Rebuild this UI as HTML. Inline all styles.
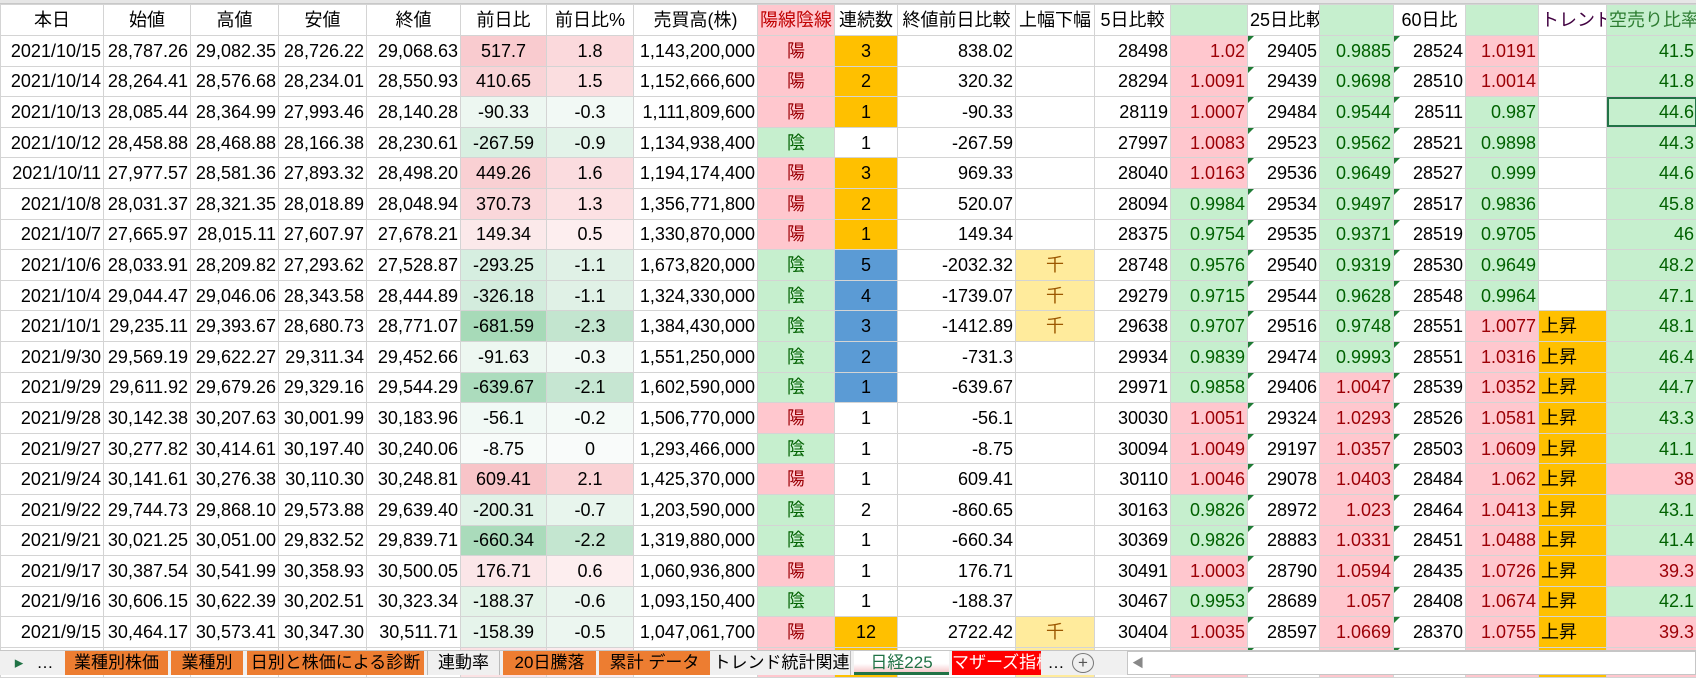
<!DOCTYPE html>
<html><head><meta charset="utf-8"><style>
*{margin:0;padding:0;box-sizing:border-box}
body{width:1696px;height:675px;overflow:hidden;background:#fff;font-family:"Liberation Sans","Noto Sans CJK JP",sans-serif;font-size:18px;color:#000;position:relative}
.top{position:absolute;left:0;top:0;width:1696px;height:4px;background:#e6e6e6;border-bottom:1px solid #c8c8c8}
table{position:absolute;left:0;top:4px;border-collapse:collapse;table-layout:fixed;width:1696px}
td{border:1px solid #d4d4d4;height:30.6px;white-space:nowrap;overflow:hidden;text-align:right;padding:0 2px;line-height:28px;position:relative;text-overflow:clip}
tr.h td{height:31px;text-align:center}
.c{text-align:center}.l{text-align:left}
.p{background:#ffc7ce;color:#9c0006}
.g{background:#c6efce;color:#006100}
.o{background:#ffc000}
.b{background:#5b9bd5}
.y{background:#ffeb9c;color:#9c5700}
.t::before{content:"";position:absolute;left:0;top:0;border-top:6px solid #1e7b34;border-right:6px solid transparent}
.sel{outline:2px solid #217346;outline-offset:-2px}
.tabs{position:absolute;left:0;top:650px;width:1696px;height:25px;background:#f0f0f0;border-top:1px solid #c6c6c6;font-size:17px}
.tab{position:absolute;top:0;height:24px;line-height:23px;text-align:center;white-space:nowrap;overflow:hidden}
.or{background:#ed7d31;color:#000}
</style></head><body>
<div class="top"></div>
<table>
<colgroup><col style="width:103px"><col style="width:87px"><col style="width:88px"><col style="width:88px"><col style="width:94px"><col style="width:86px"><col style="width:87px"><col style="width:124px"><col style="width:77px"><col style="width:63px"><col style="width:118px"><col style="width:79px"><col style="width:76px"><col style="width:77px"><col style="width:72px"><col style="width:74px"><col style="width:72px"><col style="width:73px"><col style="width:68px"><col style="width:90px"></colgroup>
<tr class="h"><td>本日</td><td>始値</td><td>高値</td><td>安値</td><td>終値</td><td>前日比</td><td>前日比%</td><td>売買高(株)</td><td class="p" style="color:#c00000">陽線陰線</td><td>連続数</td><td>終値前日比較</td><td>上幅下幅</td><td class="l">5日比較</td><td class="g"></td><td class="l">25日比較</td><td class="g"></td><td class="l">60日比</td><td class="g"></td><td class="l" style="color:#400040">トレンド</td><td class="g l" style="color:#2e7d32">空売り比率</td></tr>
<tr><td>2021/10/15</td><td>28,787.26</td><td>29,082.35</td><td>28,726.22</td><td>29,068.63</td><td class="c" style="background:#f9cbcf">517.7</td><td class="c" style="background:#fbd9dc">1.8</td><td>1,143,200,000</td><td class="c p">陽</td><td class="c o">3</td><td>838.02</td><td></td><td>28498</td><td class="p">1.02</td><td class="t">29405</td><td class="g">0.9885</td><td class="t">28524</td><td class="p">1.0191</td><td></td><td class="g">41.5</td></tr>
<tr><td>2021/10/14</td><td>28,264.41</td><td>28,576.68</td><td>28,234.01</td><td>28,550.93</td><td class="c" style="background:#f9d4d7">410.65</td><td class="c" style="background:#fbdee0">1.5</td><td>1,152,666,600</td><td class="c p">陽</td><td class="c o">2</td><td>320.32</td><td></td><td>28294</td><td class="p">1.0091</td><td class="t">29439</td><td class="g">0.9698</td><td class="t">28510</td><td class="p">1.0014</td><td></td><td class="g">41.8</td></tr>
<tr><td>2021/10/13</td><td>28,085.44</td><td>28,364.99</td><td>27,993.46</td><td>28,140.28</td><td class="c" style="background:#edf7f1">-90.33</td><td class="c" style="background:#f2f9f5">-0.3</td><td>1,111,809,600</td><td class="c p">陽</td><td class="c o">1</td><td>-90.33</td><td></td><td>28119</td><td class="p">1.0007</td><td class="t">29484</td><td class="g">0.9544</td><td class="t">28511</td><td class="g">0.987</td><td></td><td class="g sel">44.6</td></tr>
<tr><td>2021/10/12</td><td>28,458.88</td><td>28,468.88</td><td>28,166.38</td><td>28,230.61</td><td class="c" style="background:#d8efe1">-267.59</td><td class="c" style="background:#e3f3e9">-0.9</td><td>1,134,938,400</td><td class="c g">陰</td><td class="c">1</td><td>-267.59</td><td></td><td>27997</td><td class="p">1.0083</td><td class="t">29523</td><td class="g">0.9562</td><td class="t">28521</td><td class="g">0.9898</td><td></td><td class="g">44.3</td></tr>
<tr><td>2021/10/11</td><td>27,977.57</td><td>28,581.36</td><td>27,893.32</td><td>28,498.20</td><td class="c" style="background:#f9d0d3">449.26</td><td class="c" style="background:#fbdcdf">1.6</td><td>1,194,174,400</td><td class="c p">陽</td><td class="c o">3</td><td>969.33</td><td></td><td>28040</td><td class="p">1.0163</td><td class="t">29536</td><td class="g">0.9649</td><td class="t">28527</td><td class="g">0.999</td><td></td><td class="g">44.6</td></tr>
<tr><td>2021/10/8</td><td>28,031.37</td><td>28,321.35</td><td>28,018.89</td><td>28,048.94</td><td class="c" style="background:#fad7da">370.73</td><td class="c" style="background:#fce1e3">1.3</td><td>1,356,771,800</td><td class="c p">陽</td><td class="c o">2</td><td>520.07</td><td></td><td>28094</td><td class="g">0.9984</td><td class="t">29534</td><td class="g">0.9497</td><td class="t">28517</td><td class="g">0.9836</td><td></td><td class="g">45.8</td></tr>
<tr><td>2021/10/7</td><td>27,665.97</td><td>28,015.11</td><td>27,607.97</td><td>27,678.21</td><td class="c" style="background:#fbe9ea">149.34</td><td class="c" style="background:#fdeeef">0.5</td><td>1,330,870,000</td><td class="c p">陽</td><td class="c o">1</td><td>149.34</td><td></td><td>28375</td><td class="g">0.9754</td><td class="t">29535</td><td class="g">0.9371</td><td class="t">28519</td><td class="g">0.9705</td><td></td><td class="g">46</td></tr>
<tr><td>2021/10/6</td><td>28,033.91</td><td>28,209.82</td><td>27,293.62</td><td>27,528.87</td><td class="c" style="background:#d6eee0">-293.25</td><td class="c" style="background:#e0f1e6">-1.1</td><td>1,673,820,000</td><td class="c g">陰</td><td class="c b">5</td><td>-2032.32</td><td class="c y">千</td><td>28748</td><td class="g">0.9576</td><td class="t">29540</td><td class="g">0.9319</td><td class="t">28530</td><td class="g">0.9649</td><td></td><td class="g">48.2</td></tr>
<tr><td>2021/10/4</td><td>29,044.47</td><td>29,046.06</td><td>28,343.58</td><td>28,444.89</td><td class="c" style="background:#d3ecdd">-326.18</td><td class="c" style="background:#e0f1e6">-1.1</td><td>1,324,330,000</td><td class="c g">陰</td><td class="c b">4</td><td>-1739.07</td><td class="c y">千</td><td>29279</td><td class="g">0.9715</td><td class="t">29544</td><td class="g">0.9628</td><td class="t">28548</td><td class="g">0.9964</td><td></td><td class="g">47.1</td></tr>
<tr><td>2021/10/1</td><td>29,235.11</td><td>29,393.67</td><td>28,680.73</td><td>28,771.07</td><td class="c" style="background:#a7dab8">-681.59</td><td class="c" style="background:#c3e5cf">-2.3</td><td>1,384,430,000</td><td class="c g">陰</td><td class="c b">3</td><td>-1412.89</td><td class="c y">千</td><td>29638</td><td class="g">0.9707</td><td class="t">29516</td><td class="g">0.9748</td><td class="t">28551</td><td class="p">1.0077</td><td class="o l">上昇</td><td class="g">48.1</td></tr>
<tr><td>2021/9/30</td><td>29,569.19</td><td>29,622.27</td><td>29,311.34</td><td>29,452.66</td><td class="c" style="background:#edf7f1">-91.63</td><td class="c" style="background:#f2f9f5">-0.3</td><td>1,551,250,000</td><td class="c g">陰</td><td class="c b">2</td><td>-731.3</td><td></td><td>29934</td><td class="g">0.9839</td><td class="t">29474</td><td class="g">0.9993</td><td class="t">28551</td><td class="p">1.0316</td><td class="o l">上昇</td><td class="g">46.4</td></tr>
<tr><td>2021/9/29</td><td>29,611.92</td><td>29,679.26</td><td>29,329.16</td><td>29,544.29</td><td class="c" style="background:#acdcbd">-639.67</td><td class="c" style="background:#c6e6d2">-2.1</td><td>1,602,590,000</td><td class="c g">陰</td><td class="c b">1</td><td>-639.67</td><td></td><td>29971</td><td class="g">0.9858</td><td class="t">29406</td><td class="p">1.0047</td><td class="t">28539</td><td class="p">1.0352</td><td class="o l">上昇</td><td class="g">44.7</td></tr>
<tr><td>2021/9/28</td><td>30,142.38</td><td>30,207.63</td><td>30,001.99</td><td>30,183.96</td><td class="c" style="background:#f1f9f5">-56.1</td><td class="c" style="background:#f4faf7">-0.2</td><td>1,506,770,000</td><td class="c p">陽</td><td class="c">1</td><td>-56.1</td><td></td><td>30030</td><td class="p">1.0051</td><td class="t">29324</td><td class="p">1.0293</td><td class="t">28526</td><td class="p">1.0581</td><td class="o l">上昇</td><td class="g">43.3</td></tr>
<tr><td>2021/9/27</td><td>30,277.82</td><td>30,414.61</td><td>30,197.40</td><td>30,240.06</td><td class="c" style="background:#f7fbf9">-8.75</td><td class="c" style="background:#f9fbfa">0</td><td>1,293,466,000</td><td class="c g">陰</td><td class="c">1</td><td>-8.75</td><td></td><td>30094</td><td class="p">1.0049</td><td class="t">29197</td><td class="p">1.0357</td><td class="t">28503</td><td class="p">1.0609</td><td class="o l">上昇</td><td class="g">41.1</td></tr>
<tr><td>2021/9/24</td><td>30,141.61</td><td>30,276.38</td><td>30,110.30</td><td>30,248.81</td><td class="c" style="background:#f8c4c8">609.41</td><td class="c" style="background:#fad2d5">2.1</td><td>1,425,370,000</td><td class="c p">陽</td><td class="c">1</td><td>609.41</td><td></td><td>30110</td><td class="p">1.0046</td><td class="t">29078</td><td class="p">1.0403</td><td class="t">28484</td><td class="p">1.062</td><td class="o l">上昇</td><td class="p">38</td></tr>
<tr><td>2021/9/22</td><td>29,744.73</td><td>29,868.10</td><td>29,573.88</td><td>29,639.40</td><td class="c" style="background:#e0f2e7">-200.31</td><td class="c" style="background:#e8f5ed">-0.7</td><td>1,203,590,000</td><td class="c g">陰</td><td class="c">2</td><td>-860.65</td><td></td><td>30163</td><td class="g">0.9826</td><td class="t">28972</td><td class="p">1.023</td><td class="t">28464</td><td class="p">1.0413</td><td class="o l">上昇</td><td class="g">43.1</td></tr>
<tr><td>2021/9/21</td><td>30,021.25</td><td>30,051.00</td><td>29,832.52</td><td>29,839.71</td><td class="c" style="background:#aadbbb">-660.34</td><td class="c" style="background:#c4e6d0">-2.2</td><td>1,319,880,000</td><td class="c g">陰</td><td class="c">1</td><td>-660.34</td><td></td><td>30369</td><td class="g">0.9826</td><td class="t">28883</td><td class="p">1.0331</td><td class="t">28451</td><td class="p">1.0488</td><td class="o l">上昇</td><td class="g">41.4</td></tr>
<tr><td>2021/9/17</td><td>30,387.54</td><td>30,541.99</td><td>30,358.93</td><td>30,500.05</td><td class="c" style="background:#fbe6e8">176.71</td><td class="c" style="background:#fdeeef">0.6</td><td>1,060,936,800</td><td class="c p">陽</td><td class="c">1</td><td>176.71</td><td></td><td>30491</td><td class="p">1.0003</td><td class="t">28790</td><td class="p">1.0594</td><td class="t">28435</td><td class="p">1.0726</td><td class="o l">上昇</td><td class="p">39.3</td></tr>
<tr><td>2021/9/16</td><td>30,606.15</td><td>30,622.39</td><td>30,202.51</td><td>30,323.34</td><td class="c" style="background:#e3f3e8">-188.37</td><td class="c" style="background:#eaf5ee">-0.6</td><td>1,093,150,400</td><td class="c g">陰</td><td class="c">1</td><td>-188.37</td><td></td><td>30467</td><td class="g">0.9953</td><td class="t">28689</td><td class="p">1.057</td><td class="t">28408</td><td class="p">1.0674</td><td class="o l">上昇</td><td class="g">42.1</td></tr>
<tr><td>2021/9/15</td><td>30,464.17</td><td>30,573.41</td><td>30,347.30</td><td>30,511.71</td><td class="c" style="background:#e6f4eb">-158.39</td><td class="c" style="background:#ecf6f0">-0.5</td><td>1,047,061,700</td><td class="c p">陽</td><td class="c o">12</td><td>2722.42</td><td class="c y">千</td><td>30404</td><td class="p">1.0035</td><td class="t">28597</td><td class="p">1.0669</td><td class="t">28370</td><td class="p">1.0755</td><td class="o l">上昇</td><td class="p">39.3</td></tr>
<tr><td>2021/9/14</td><td>30,584.77</td><td>30,795.78</td><td>30,504.81</td><td>30,670.10</td><td class="c" style="background:#fbe2e4">222.73</td><td class="c" style="background:#fcebed">0.7</td><td>1,144,580,700</td><td class="c p">陽</td><td class="c o">11</td><td>2880.81</td><td class="c y">千</td><td>30338</td><td class="p">1.011</td><td class="t">28499</td><td class="p">1.0762</td><td class="t">28344</td><td class="p">1.0821</td><td class="o l">上昇</td><td class="p">38</td></tr>
</table>
<div class="tabs">
<div class="tab" style="left:10px;width:18px;color:#217346">&#9656;</div>
<div class="tab" style="left:34px;width:22px">…</div>
<div class="tab or" style="left:65px;width:103px">業種別株価</div>
<div class="tab or" style="left:171px;width:72px">業種別</div>
<div class="tab or" style="left:247px;width:177px">日別と株価による診断</div>
<div class="tab" style="left:427px;width:73px;background:#f0f0f0;border-left:1px solid #bbb;border-right:1px solid #bbb">連動率</div>
<div class="tab or" style="left:503px;width:93px">20日騰落</div>
<div class="tab or" style="left:599px;width:111px">累計 データ</div>
<div class="tab" style="left:713px;width:138px;border-right:1px solid #bbb">トレンド統計関連</div>
<div class="tab" style="left:854px;width:95px;background:linear-gradient(#fff 60%,#f6c9cc);color:#217346;border-bottom:3px solid #217346">日経225</div>
<div class="tab" style="left:952px;width:89px;background:#ff0000;color:#fff">マザーズ指標</div>
<div class="tab" style="left:1046px;width:20px">…</div>
<div class="tab" style="left:1072px;width:22px;top:2px;height:20px;line-height:17px;border:1px solid #777;border-radius:50%;color:#555">+</div>
<div class="tab" style="left:1110px;width:4px;color:#888">⋮</div>
<div class="tab" style="left:1127px;width:569px;background:#fff;border:1px solid #c6c6c6;text-align:left;padding-left:4px;color:#888;font-size:12px">&#9664;</div>
</div>
</body></html>
